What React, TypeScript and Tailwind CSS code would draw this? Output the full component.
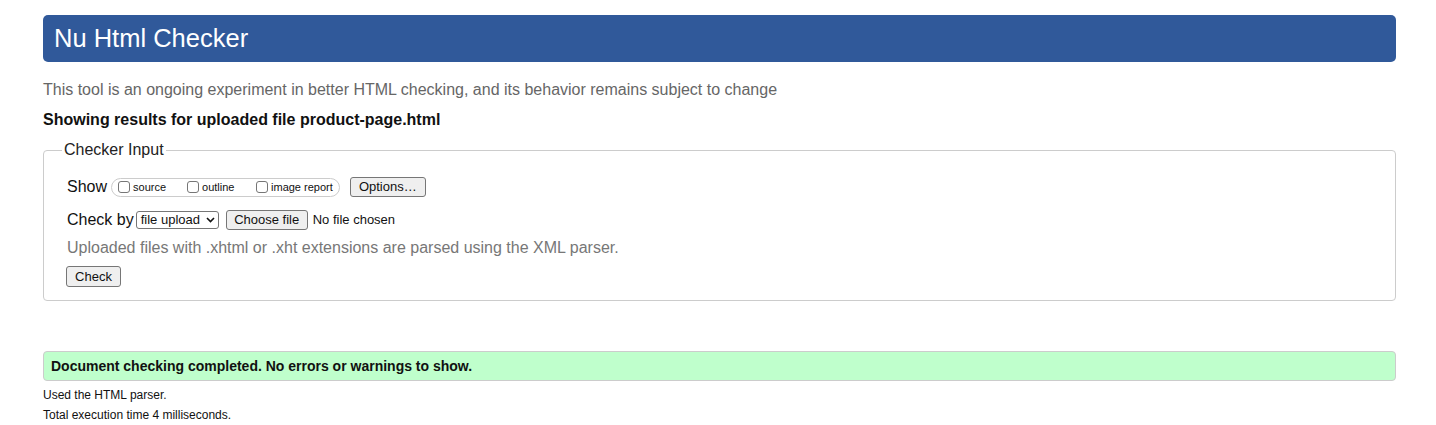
export default function App() {
  return (
    <div className="min-h-[425px] bg-white pl-[43px] pr-[40px] pt-[15px] font-['Liberation_Sans',Arial,sans-serif] text-[#111]">
      {/* Header */}
      <div className="flex h-[47px] items-center rounded-[5px] bg-[#30599a] px-[11px]">
        <h1 className="text-[25.5px] leading-none text-white">Nu Html Checker</h1>
      </div>

      <p className="mt-[19px] text-[16px] leading-[18px] text-[#666]">
        This tool is an ongoing experiment in better HTML checking, and its behavior remains subject to change
      </p>
      <p className="mt-[12px] text-[16px] font-bold leading-[18px] text-[#111]">
        Showing results for uploaded file product-page.html
      </p>

      {/* Checker input */}
      <fieldset className="mt-[12px] rounded-[4px] border border-[#ccc] px-[23px] pb-[13px]">
        <legend className="-ml-[5px] px-[2px] text-[16px] leading-[18px] text-[#222]">Checker Input</legend>

        <div className="mt-[18px] flex items-center">
          <span className="text-[16px] leading-[18px]">Show</span>
          <div className="ml-[4px] flex h-[19px] items-center rounded-full border border-[#ccc] pl-[6px] pr-[6px]">
            <Box />
            <span className="ml-[3px] w-[54px] text-[11px]">source</span>
            <Box />
            <span className="ml-[3px] w-[54px] text-[11px]">outline</span>
            <Box />
            <span className="ml-[3px] text-[11px]">image report</span>
          </div>
          <Btn className="ml-[10px] h-[20px] w-[76px]">Options…</Btn>
        </div>

        <div className="mt-[13px] flex items-center">
          <span className="text-[16px] leading-[18px]">Check by</span>
          <div className="ml-[2px] flex h-[18px] w-[83px] items-center justify-between rounded-[3px] border border-[#767676] bg-white pl-[4px] pr-[3px] text-[13px]">
            <span>file upload</span>
            <svg width="9" height="6" viewBox="0 0 9 6" fill="none">
              <path d="M1 1l3.5 3.5L8 1" stroke="#111" strokeWidth="1.6" />
            </svg>
          </div>
          <Btn className="ml-[7px] h-[20px] w-[82px]">Choose file</Btn>
          <span className="ml-[5px] text-[13px]">No file chosen</span>
        </div>

        <p className="mt-[9px] text-[16px] leading-[18px] text-[#777]">
          Uploaded files with .xhtml or .xht extensions are parsed using the XML parser.
        </p>

        <Btn className="-ml-[1px] mt-[9px] h-[21px] w-[55px]">Check</Btn>
      </fieldset>

      {/* Result */}
      <div className="mt-[50px] flex h-[30px] items-center rounded-[4px] border border-[#ccc] bg-[#bfffcc] px-[7px]">
        <span className="text-[14px] font-bold text-[#111]">
          Document checking completed. No errors or warnings to show.
        </span>
      </div>
      <p className="mt-[7px] text-[12px] leading-[14px] text-[#111]">Used the HTML parser.</p>
      <p className="mt-[6px] text-[12px] leading-[14px] text-[#111]">Total execution time 4 milliseconds.</p>
    </div>
  );
}

function Box() {
  return <span className="inline-block h-[12px] w-[12px] shrink-0 rounded-[3px] border border-[#767676] bg-white" />;
}

function Btn({ children, className = "" }: { children: React.ReactNode; className?: string }) {
  return (
    <span
      className={`flex items-center justify-center rounded-[3px] border border-[#767676] bg-[#efefef] text-[13px] text-[#111] ${className}`}
    >
      {children}
    </span>
  );
}
